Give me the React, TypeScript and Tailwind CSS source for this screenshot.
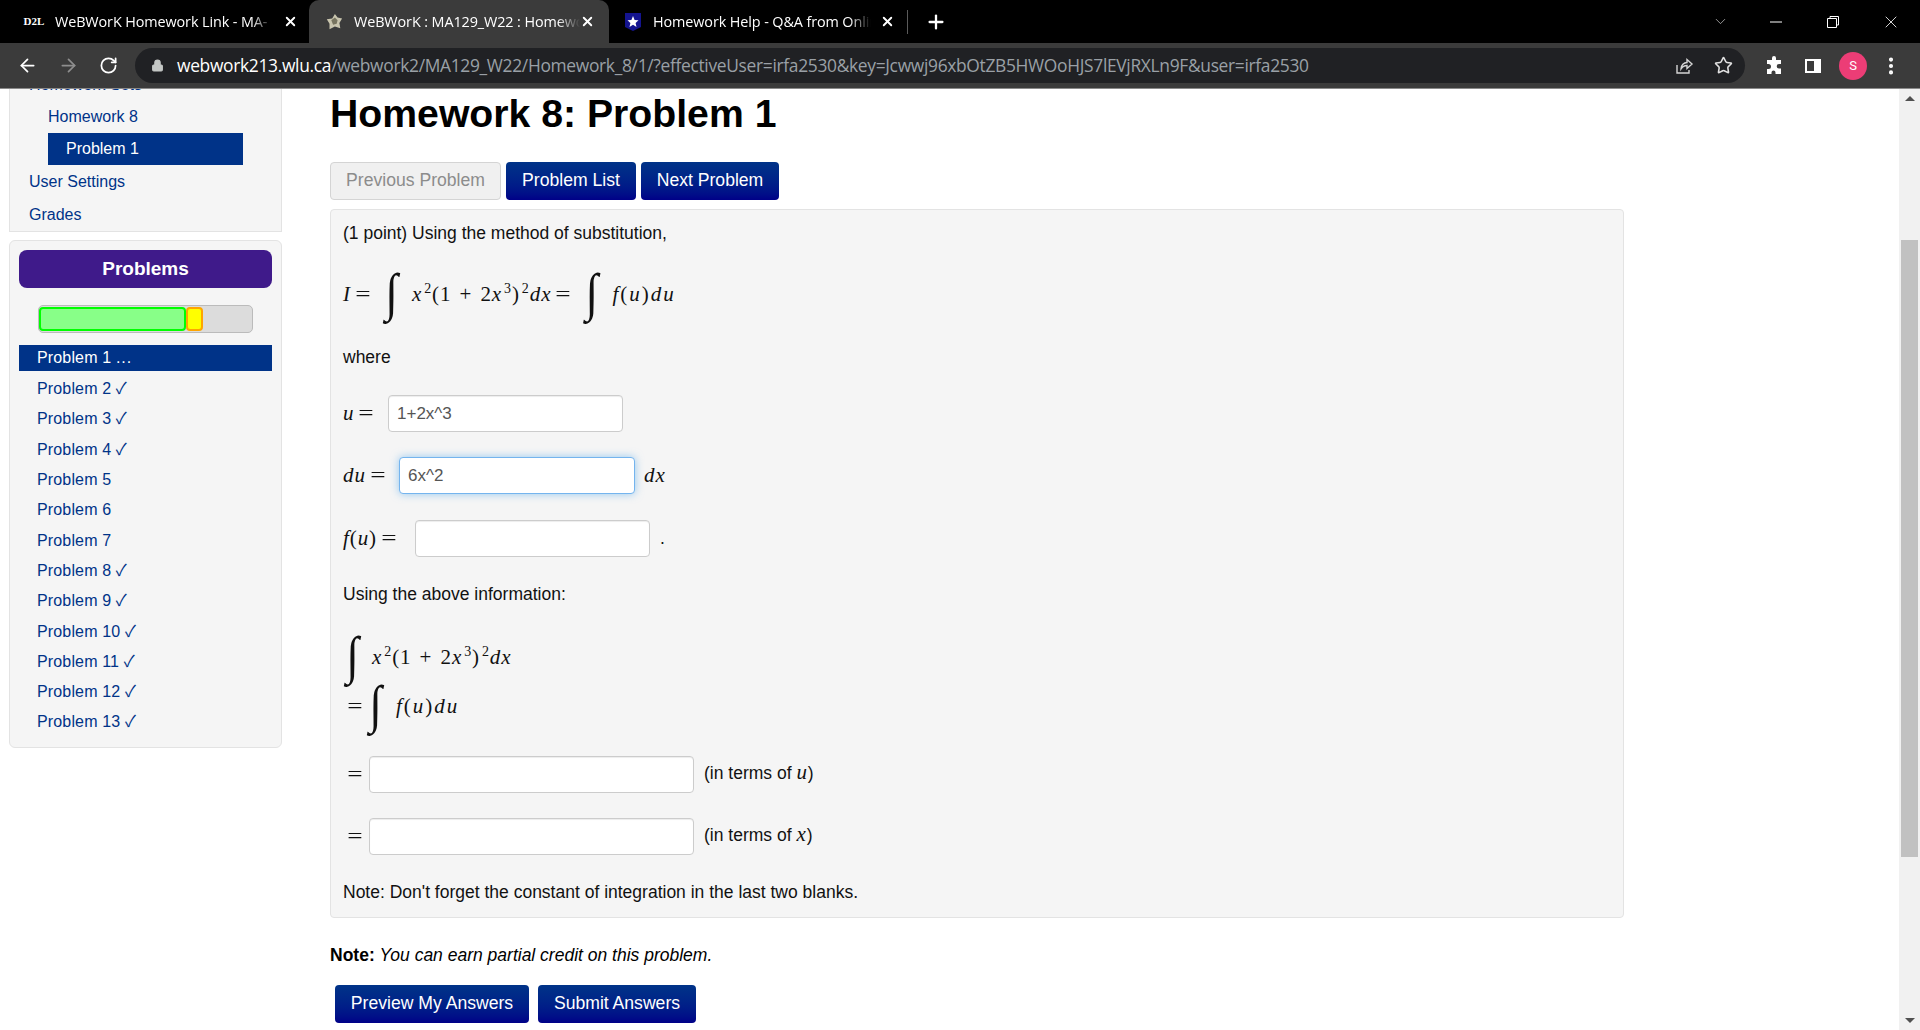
import { ArrowLeft, ArrowRight, ChevronDown, Lock, MoreVertical, Plus, RotateCw, Star, X } from 'lucide-react';
import type { ReactNode } from 'react';

const problems = [
  'Problem 2 ✓',
  'Problem 3 ✓',
  'Problem 4 ✓',
  'Problem 5',
  'Problem 6',
  'Problem 7',
  'Problem 8 ✓',
  'Problem 9 ✓',
  'Problem 10 ✓',
  'Problem 11 ✓',
  'Problem 12 ✓',
  'Problem 13 ✓',
];

function V({ children }: { children: ReactNode }) {
  return <i className="italic">{children}</i>;
}

function Sup({ children }: { children: ReactNode }) {
  return <sup className="relative -top-[8px] ml-[2px] align-baseline text-[14px] leading-none">{children}</sup>;
}

function Eq() {
  return <span className="mx-[5px] inline-block w-[15px] origin-center scale-x-[1.3] text-center not-italic">=</span>;
}

function Integral({ margin = 'relative -left-[2px] mx-[8px]' }: { margin?: string }) {
  return (
    <span
      className={`relative -top-[3px] inline-block w-[20px] origin-center scale-y-[1.14] text-center align-middle font-['Liberation_Serif',serif] text-[46px] leading-[50px] font-normal ${margin}`}
    >
      ∫
    </span>
  );
}

function Integrand() {
  return (
    <>
      <V>x</V>
      <Sup>2</Sup>(1 + 2<V>x</V>
      <Sup>3</Sup>)<Sup>2</Sup>
      <V>dx</V>
    </>
  );
}

function FuDu() {
  return (
    <span className="tracking-[2px]">
      <V>f</V>(<V>u</V>)<V>du</V>
    </span>
  );
}

function Math({ children, className = '' }: { children: ReactNode; className?: string }) {
  return (
    <span
      className={`font-['Liberation_Serif',serif] text-[21px] tracking-[0.9px] whitespace-nowrap text-[#111] [word-spacing:2px] ${className}`}
    >
      {children}
    </span>
  );
}

function Field({ value = '', width, focused = false }: { value?: string; width: string; focused?: boolean }) {
  return (
    <input
      readOnly
      value={value}
      className={`h-[37px] rounded-[4px] border bg-white px-[8px] text-[17px] text-[#555] outline-none ${width} ${
        focused
          ? 'border-[#74b4ee] shadow-[0_0_8px_rgba(82,168,236,0.6)]'
          : 'border-[#ccc] shadow-[inset_0_1px_1px_rgba(0,0,0,0.075)]'
      }`}
    />
  );
}

function BlueButton({ children, className = '' }: { children: ReactNode; className?: string }) {
  return (
    <button
      className={`flex h-[38px] items-center justify-center rounded-[4px] bg-gradient-to-b from-[#003388] to-[#000088] pb-[2px] text-[17.6px] text-white ${className}`}
    >
      {children}
    </button>
  );
}

function Tab({
  title,
  icon,
  active = false,
  className,
  titleClass,
}: {
  title: string;
  icon: ReactNode;
  active?: boolean;
  className: string;
  titleClass: string;
}) {
  return (
    <div className={`relative flex h-[43px] items-center ${active ? 'rounded-t-[10px] bg-[#3b3b3b]' : ''} ${className}`}>
      <span className="flex w-[20px] shrink-0 items-center justify-center">{icon}</span>
      <span
        className={`overflow-hidden font-['Open_Sans',sans-serif] text-[14.4px] tracking-[-0.1px] whitespace-nowrap text-white ${titleClass} [mask-image:linear-gradient(to_right,black_90%,transparent)]`}
      >
        {title}
      </span>
      <X className="ml-auto h-[15px] w-[15px] text-white" strokeWidth={3} />
    </div>
  );
}

function BrowserChrome() {
  return (
    <header className="shrink-0">
      <div className="flex h-[43px] items-center bg-black">
        <Tab
          className="ml-[24px] w-[274px]"
          titleClass="ml-[11px] w-[218px]"
          title="WeBWorK Homework Link - MA-"
          icon={<span className="font-['Liberation_Serif',serif] text-[11px] font-bold text-white">D2L</span>}
        />
        <Tab
          active
          className="ml-[11px] w-[300px] pr-[14px] pl-[15px]"
          titleClass="ml-[10px] w-[226px]"
          title="WeBWorK : MA129_W22 : Homework 8"
          icon={
            <svg viewBox="0 0 20 20" className="h-[18px] w-[18px]">
              <path d="M2 7 L8 6 L11 1 L14 5 L19 6 L16 11 L17 17 L11 15 L5 18 L5 12 Z" fill="#c9c5ae" />
              <path d="M7 8 L11 5 L14 8 L13 12 L9 13 Z" fill="#77745f" />
            </svg>
          }
        />
        <Tab
          className="ml-[6px] w-[280px] pl-[8px]"
          titleClass="ml-[10px] w-[218px]"
          title="Homework Help - Q&A from Online Tutors"
          icon={
            <svg viewBox="0 0 20 20" className="h-[20px] w-[20px]">
              <path d="M2 1 H18 V15 L10 19 L2 15 Z" fill="#14148f" />
              <path
                d="M10 4 L11.6 8 L15.5 8.3 L12.6 11 L13.5 15 L10 12.8 L6.5 15 L7.4 11 L4.5 8.3 L8.4 8 Z"
                fill="#fff"
              />
            </svg>
          }
        />
        <div className="ml-[12px] h-[24px] w-px bg-[#5a5a5a]" />
        <Plus className="ml-[17px] h-[22px] w-[22px] text-white" strokeWidth={2.5} />
        <div className="ml-auto flex items-center">
          <ChevronDown className="h-[17px] w-[17px] text-[#cfcfcf]" strokeWidth={1} />
          <svg viewBox="0 0 14 14" className="ml-[40px] h-[14px] w-[14px] text-white">
            <path d="M1 7 H13" stroke="currentColor" strokeWidth="1" />
          </svg>
          <svg viewBox="0 0 14 14" className="ml-[43px] h-[14px] w-[14px] text-white" fill="none" stroke="currentColor">
            <path d="M1.5 3.5 H10.5 V12.5 H1.5 Z M4 3.5 V1.5 H12.5 V10 H10.5" />
          </svg>
          <X className="mr-[19px] ml-[41px] h-[20px] w-[20px] text-white" strokeWidth={1} />
        </div>
      </div>
      <div className="flex h-[46px] items-center border-b border-[#8a8a8a] bg-[#3b3b3b]">
        <ArrowLeft className="ml-[17px] h-[21px] w-[21px] text-white" strokeWidth={2} />
        <ArrowRight className="ml-[20px] h-[21px] w-[21px] text-[#8e8e8e]" strokeWidth={2} />
        <RotateCw className="ml-[20px] h-[19px] w-[19px] text-white" strokeWidth={2.2} />
        <div className="ml-[17px] flex h-[35px] w-[1610px] items-center rounded-full bg-[#202124]">
          <Lock className="ml-[16px] h-[13px] w-[13px] fill-[#c4c7c5] text-[#c4c7c5]" />
          <span className="ml-[13px] w-[1140px] font-['Open_Sans',sans-serif] text-[17.4px] tracking-[-0.32px] whitespace-nowrap text-[#9aa0a6]">
            <span className="text-white">webwork213.wlu.ca</span>
            /webwork2/MA129_W22/Homework_8/1/?effectiveUser=irfa2530&key=Jcwwj96xbOtZB5HWOoHJS7lEVjRXLn9F&user=irfa2530
          </span>
          <svg viewBox="0 0 20 20" className="ml-auto h-[20px] w-[20px] text-[#d5d5d5]" fill="none" stroke="currentColor" strokeWidth="1.4">
            <path d="M3 9 V17 H15 V14 M7 13 C7 9 10 6.5 13 6.5 V3.5 L18 8 L13 12.5 V9.5 C10.5 9.5 8.5 10.5 7 13 Z" />
          </svg>
          <Star className="mr-[12px] ml-[20px] h-[19px] w-[19px] text-[#e0e0e0]" strokeWidth={2} />
        </div>
        <svg viewBox="0 0 20 20" className="ml-[19px] h-[20px] w-[20px] text-white" fill="currentColor">
          <path d="M8 2 a2 2 0 0 1 4 0 V4 H17 V8 H15 a2.3 2.3 0 0 0 0 4.6 H17 V18 H11.5 V16.5 a2 2 0 0 0 -4 0 V18 H3 V13 H4.5 a2.5 2.5 0 0 0 0 -5 H3 V4 H8 Z" />
        </svg>
        <svg viewBox="0 0 20 20" className="ml-[19px] h-[20px] w-[20px]">
          <rect x="2" y="3" width="16" height="14" fill="#fff" />
          <rect x="4" y="5" width="7" height="10" fill="#3b3b3b" />
        </svg>
        <span className="ml-[16px] flex h-[28px] w-[28px] items-center justify-center rounded-full bg-[#ec3d76] font-['Roboto',sans-serif] text-[13px] text-white">
          S
        </span>
        <MoreVertical className="ml-[13px] h-[22px] w-[22px] text-white" strokeWidth={2.5} />
      </div>
    </header>
  );
}

function Sidebar() {
  return (
    <aside className="ml-[9px] w-[273px] shrink-0 text-[16px] text-[#003388]">
      <div className="-mt-[21px] border border-[#e3e3e3] bg-[#f5f5f5]">
        <div className="flex h-[32px] items-center pl-[19px]">Homework Sets</div>
        <div className="flex h-[32px] items-center pl-[38px]">Homework 8</div>
        <div className="ml-[38px] flex h-[32px] w-[195px] items-center bg-[#003388] pl-[18px] text-white">Problem 1</div>
        <div className="flex h-[33px] items-center pl-[19px]">User Settings</div>
        <div className="flex h-[33px] items-center pl-[19px]">Grades</div>
      </div>
      <div className="mt-[8px] rounded-[6px] border border-[#e3e3e3] bg-[#f5f5f5] px-[9px] pt-[9px] pb-[9px]">
        <div className="flex h-[38px] items-center justify-center rounded-[8px] bg-[#3f1a8a] text-[19px] font-bold text-white">
          Problems
        </div>
        <div className="mx-[19px] mt-[17px] flex h-[28px] rounded-[5px] border border-[#bbb] bg-[#dcdcdc] py-px">
          <div className="w-[147px] rounded-[4px] border-2 border-[#00ff00] bg-[#88ff88]" />
          <div className="w-[17px] rounded-[4px] border-2 border-[#ffa500] bg-[#ffff00]" />
        </div>
        <div className="mt-[12px] flex h-[26px] items-center bg-[#003388] pl-[18px] tracking-[0.15px] whitespace-pre text-white">
          Problem 1 <span className="tracking-[1px]">...</span>
        </div>
        <ul className="mt-[3px] font-['Liberation_Sans','Noto_Sans_CJK_SC',sans-serif] tracking-[0.15px]">
          {problems.map((p) => (
            <li key={p} className="flex h-[30.3px] items-center pl-[18px]">
              {p}
            </li>
          ))}
        </ul>
      </div>
    </aside>
  );
}

function ProblemBody() {
  return (
    <div className="mt-[9px] h-[709px] w-[1294px] rounded-[4px] border border-[#e3e3e3] bg-[#f5f5f5] px-[12px] text-[17.5px] text-[#111]">
      <p className="mt-[10px] leading-[26px]">(1 point) Using the method of substitution,</p>
      <div className="mt-[23px] flex h-[54px] items-center">
        <Math>
          <V>I</V>
          <Eq />
          <Integral />
          <Integrand />
          <Eq />
          <Integral />
          <FuDu />
        </Math>
      </div>
      <p className="mt-[21px] leading-[26px]">where</p>
      <div className="mt-[25px] flex items-center">
        <Math className="w-[45px]">
          <V>u</V>
          <Eq />
        </Math>
        <Field value="1+2x^3" width="w-[235px]" />
      </div>
      <div className="mt-[25px] flex items-center">
        <Math className="w-[56px]">
          <V>du</V>
          <Eq />
        </Math>
        <Field value="6x^2" width="w-[236px]" focused />
        <Math className="ml-[9px]">
          <V>dx</V>
        </Math>
      </div>
      <div className="mt-[26px] flex items-center">
        <Math className="w-[72px]">
          <V>f</V>(<V>u</V>)
          <Eq />
        </Math>
        <Field width="w-[235px]" />
        <span className="ml-[10px]">.</span>
      </div>
      <p className="mt-[24px] leading-[26px]">Using the above information:</p>
      <div className="mt-[28px] flex h-[48px] items-center">
        <Math>
          <Integral margin="ml-0 mr-[9px]" />
          <Integrand />
        </Math>
      </div>
      <div className="flex h-[50px] items-center">
        <Math>
          <Eq />
          <Integral margin="-ml-[2px] mr-[10px]" />
          <FuDu />
        </Math>
      </div>
      <div className="mt-[23px] flex items-center">
        <Math className="w-[26px]">
          <Eq />
        </Math>
        <Field width="w-[325px]" />
        <span className="ml-[10px] pb-[3px]">
          (in terms of{' '}
          <Math>
            <V>u</V>
          </Math>
          )
        </span>
      </div>
      <div className="mt-[25px] flex items-center">
        <Math className="w-[26px]">
          <Eq />
        </Math>
        <Field width="w-[325px]" />
        <span className="ml-[10px] pb-[3px]">
          (in terms of{' '}
          <Math>
            <V>x</V>
          </Math>
          )
        </span>
      </div>
      <p className="mt-[24px] leading-[26px]">Note: Don't forget the constant of integration in the last two blanks.</p>
    </div>
  );
}

function Scrollbar() {
  return (
    <div className="ml-auto flex w-[21px] shrink-0 flex-col items-center bg-[#f1f1f1]">
      <div className="mt-[7px] h-0 w-0 border-x-[5px] border-b-[5px] border-x-transparent border-b-[#505050]" />
      <div className="mt-[139px] h-[617px] w-[17px] bg-[#c1c1c1]" />
      <div className="mt-auto mb-[7px] h-0 w-0 border-x-[5px] border-t-[5px] border-x-transparent border-t-[#505050]" />
    </div>
  );
}

export default function App() {
  return (
    <div className="flex h-[1030px] w-[1920px] flex-col overflow-hidden bg-white font-['Liberation_Sans',Arial,sans-serif]">
      <BrowserChrome />
      <div className="flex min-h-0 flex-1 overflow-hidden">
        <Sidebar />
        <main className="ml-[48px] w-[1294px] shrink-0">
          <h1 className="mt-[1px] text-[39.2px] leading-[47px] font-bold text-black">Homework 8: Problem 1</h1>
          <div className="mt-[25px] flex gap-[5px]">
            <button className="h-[38px] w-[171px] rounded-[4px] border border-[#d4d4d4] bg-[#f0f0f0] pb-[2px] text-[17.6px] text-[#8c8c8c]">
              Previous Problem
            </button>
            <BlueButton className="w-[130px]">Problem List</BlueButton>
            <BlueButton className="w-[138px]">Next Problem</BlueButton>
          </div>
          <ProblemBody />
          <p className="mt-[24px] text-[17.5px] leading-[26px] text-black">
            <b>Note:</b> <em>You can earn partial credit on this problem.</em>
          </p>
          <div className="mt-[17px] flex gap-[9px] pl-[5px]">
            <BlueButton className="w-[194px]">Preview My Answers</BlueButton>
            <BlueButton className="w-[158px]">Submit Answers</BlueButton>
          </div>
        </main>
        <Scrollbar />
      </div>
    </div>
  );
}
